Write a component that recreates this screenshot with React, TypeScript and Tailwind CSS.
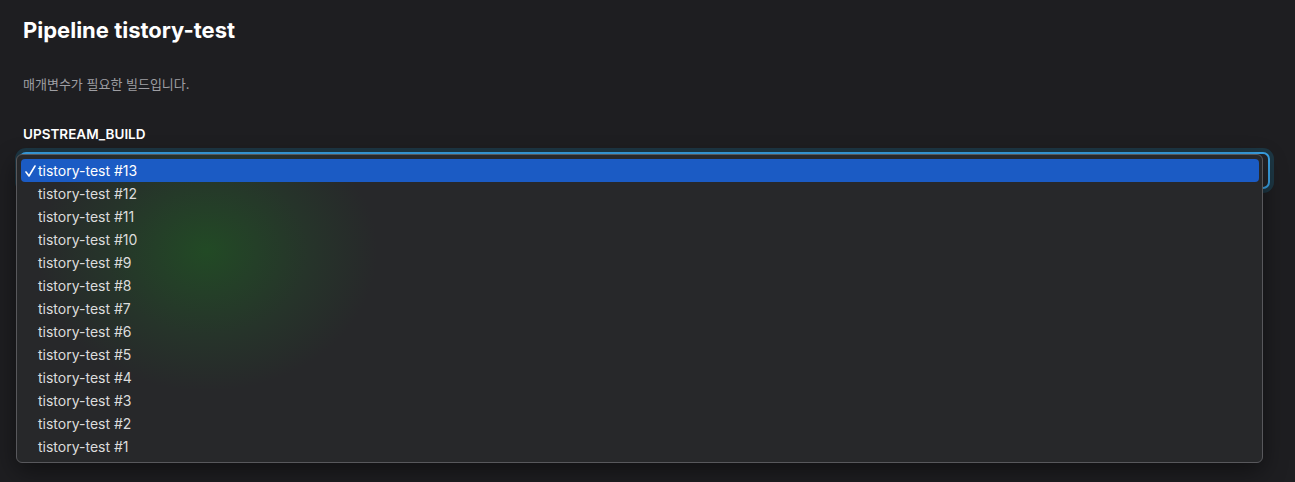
const builds = [13, 12, 11, 10, 9, 8, 7, 6, 5, 4, 3, 2, 1];

function Check() {
  return (
    <svg width="11" height="12" viewBox="0 0 11 12" fill="none" stroke="currentColor" strokeWidth="1.6" strokeLinecap="round" strokeLinejoin="round">
      <path d="M1 7l3 4L10 1" />
    </svg>
  );
}

function BuildMenu({ selected }: { selected: number }) {
  return (
    <div className="absolute left-[-3px] top-[2px] w-[1247px] rounded-[6px] border border-[#58585c] bg-[radial-gradient(ellipse_170px_140px_at_190px_96px,#224a25_0%,#243f28_30%,#26342a_60%,#27282a_100%)] bg-[#27282a] px-[4px] py-[4px] shadow-[0_8px_24px_rgba(0,0,0,0.45)]">
      {builds.map((n) => {
        const active = n === selected;
        return (
          <div
            key={n}
            className={
              active
                ? "flex h-[23px] w-[1238px] items-center rounded-[4px] bg-[#1b5bc4] text-white"
                : "flex h-[23px] w-[1238px] items-center text-[#dcdcdc]"
            }
          >
            <span className="flex w-[17px] justify-start pl-[4px]">{active ? <Check /> : null}</span>
            <span className="text-[14px]">tistory-test #{n}</span>
          </div>
        );
      })}
    </div>
  );
}

export default function App() {
  return (
    <div className="h-[482px] w-full bg-[#1e1e21] px-[19px] pt-[16px] font-['Inter','Noto_Sans_CJK_KR',sans-serif]">
      <h1 className="px-[4px] text-[22px] font-bold leading-[28px] text-white">Pipeline tistory-test</h1>
      <p className="mt-[32px] px-[4px] text-[13px] leading-[16px] text-[#9e9ea3]">
        매개변수가 필요한 빌드입니다.
      </p>
      <div className="mt-[34px] px-[4px] text-[13.5px] font-semibold leading-[16px] text-white">UPSTREAM_BUILD</div>
      <div className="relative mt-[10px] w-[1251px]">
        <div className="h-[37px] rounded-[7px] border-2 border-[#3aa3e6] bg-[#242427] shadow-[0_0_0_4px_#1d3744]" />
        <BuildMenu selected={13} />
      </div>
    </div>
  );
}
